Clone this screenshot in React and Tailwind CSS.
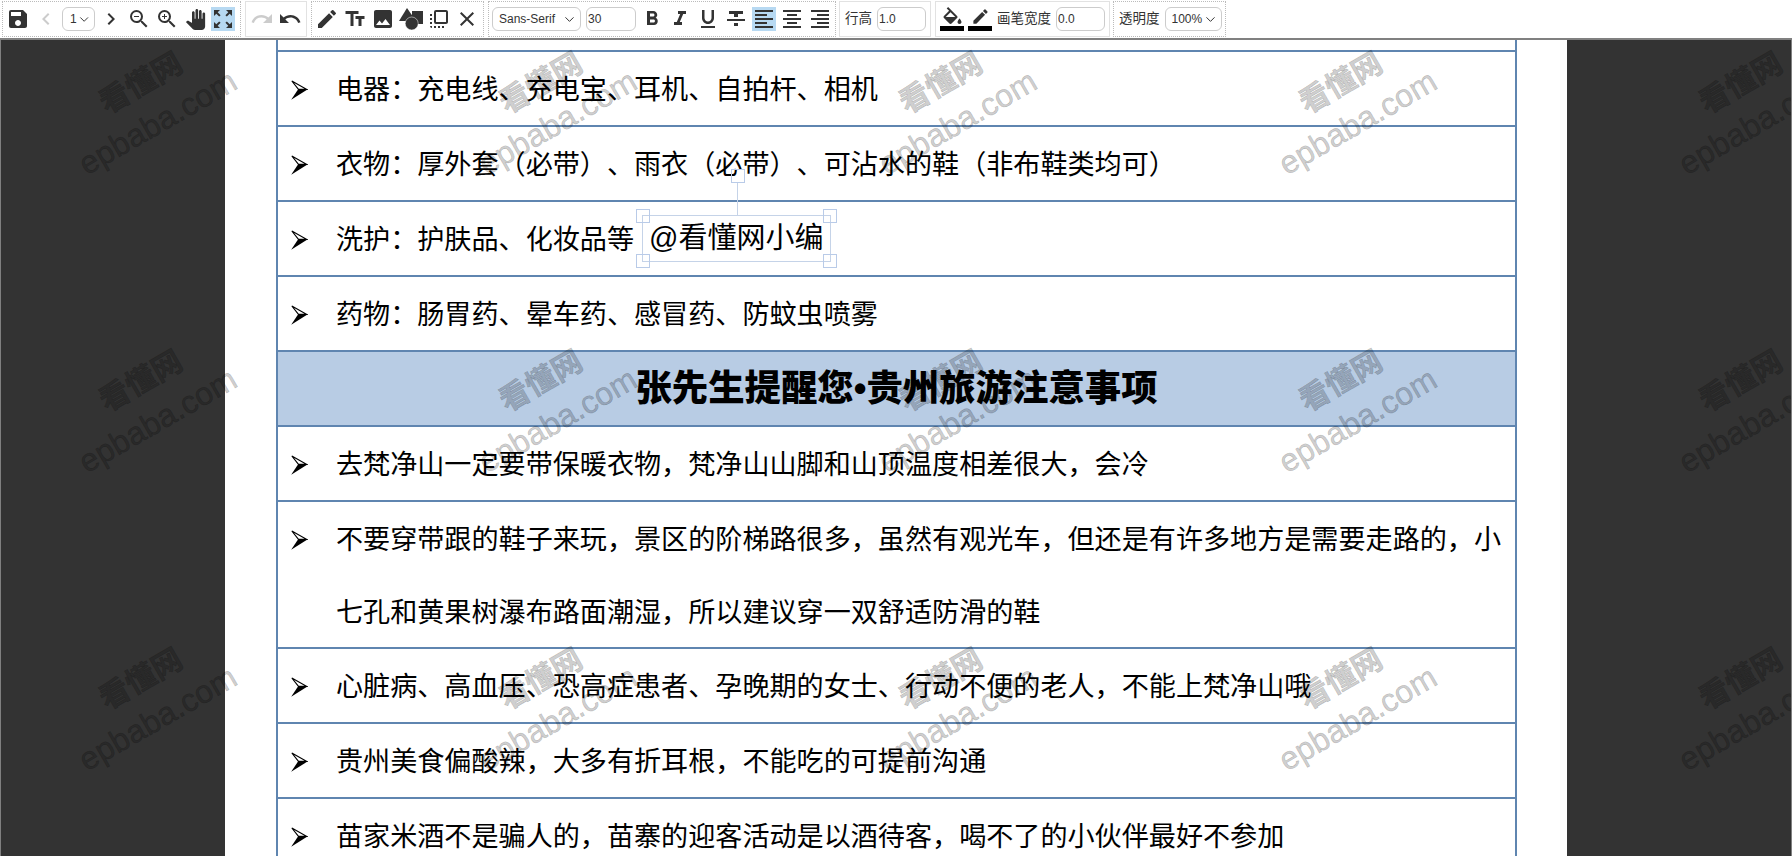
import React from "react";
import {
  MdSave, MdChevronLeft, MdChevronRight, MdZoomOut, MdZoomIn, MdPanTool, MdZoomOutMap,
  MdRedo, MdUndo, MdEdit, MdTextFields, MdImage, MdFlipToFront, MdClose,
  MdFormatBold, MdFormatItalic, MdFormatUnderlined, MdFormatStrikethrough,
  MdFormatAlignLeft, MdFormatAlignCenter, MdFormatAlignRight,
} from "react-icons/md";
import { ChevronDown } from "lucide-react";

const sans = "font-['Liberation_Sans','Noto_Sans_CJK_SC',sans-serif]";

function Btn({ icon: I, off, on, size = 24 }) {
  return (
    <div className={`w-6 h-6 flex items-center justify-center shrink-0 ${on ? "bg-[#b7d9f2]" : ""} ${off ? "text-[#cccccc]" : "text-[#333333]"}`}>
      <I size={size} />
    </div>
  );
}

function Sel({ w, label, pad }) {
  return (
    <div className={`${w} ${pad} h-6 shrink-0 flex items-center justify-between pr-[3px] border border-[#cccccc] rounded-[6px] text-[12px] text-[#333333]`}>
      <span>{label}</span>
      <ChevronDown size={15} strokeWidth={1.6} />
    </div>
  );
}

function Num({ value, w }) {
  return (
    <input
      readOnly
      value={value}
      className={`${w} h-6 shrink-0 pl-[1px] border border-[#cccccc] rounded-[6px] text-[12px] text-[#333333] outline-none`}
    />
  );
}

function Shapes() {
  return (
    <div className="w-6 h-6 shrink-0 flex items-center justify-center text-[#333333]">
      <svg width="24" height="23" viewBox="0 0 24 23">
        <rect x="13" y="3" width="11" height="13" fill="currentColor" />
        <path d="M8 0 L17 13 H0 Z" fill="currentColor" />
        <circle cx="12.7" cy="15.5" r="6.5" fill="currentColor" stroke="#fff" strokeWidth="0.5" />
      </svg>
    </div>
  );
}

function ColorBtn({ children }) {
  return (
    <div className="w-6 h-6 shrink-0 flex flex-col items-center justify-between text-[#333333]">
      {children}
      <div className="w-6 h-[5px] bg-black shrink-0" />
    </div>
  );
}

function Toolbar() {
  return (
    <div className={`${sans} h-[38px] bg-white flex items-start gap-[3px] pl-[2px] pt-[1px]`}>
      <div className="w-[239px] h-[36px] border border-dotted border-[#bbbbbb] flex items-center gap-1 pl-[3px]">
        <Btn icon={MdSave} />
        <Btn icon={MdChevronLeft} off />
        <Sel w="w-[33px]" label="1" pad="pl-[7px]" />
        <Btn icon={MdChevronRight} />
        <Btn icon={MdZoomOut} />
        <Btn icon={MdZoomIn} />
        <Btn icon={MdPanTool} size={21} />
        <Btn icon={MdZoomOutMap} on />
      </div>
      <div className="w-[62px] h-[36px] ml-[1px] border border-[#e2e2e2] flex items-center gap-1 pl-[4px]">
        <Btn icon={MdRedo} off />
        <Btn icon={MdUndo} />
      </div>
      <div className="w-[173px] h-[36px] ml-[1px] border border-dotted border-[#bbbbbb] flex items-center gap-1 pl-[3px]">
        <Btn icon={MdEdit} />
        <Btn icon={MdTextFields} />
        <Btn icon={MdImage} />
        <Shapes />
        <Btn icon={MdFlipToFront} />
        <Btn icon={MdClose} />
      </div>
      <div className="w-[348px] h-[36px] ml-[1px] border border-dotted border-[#bbbbbb] flex items-center gap-1 pl-[3px]">
        <Sel w="w-[89px]" label="Sans-Serif" pad="pl-[6px]" />
        <Num value="30" w="w-[50px] ml-[1px]" />
        <Btn icon={MdFormatBold} />
        <Btn icon={MdFormatItalic} />
        <Btn icon={MdFormatUnderlined} />
        <Btn icon={MdFormatStrikethrough} />
        <Btn icon={MdFormatAlignLeft} on />
        <Btn icon={MdFormatAlignCenter} />
        <Btn icon={MdFormatAlignRight} />
      </div>
      <div className="w-[92px] h-[36px] border border-[#e2e2e2] flex items-center gap-[5px] pl-[5px] text-[13.5px] text-[#333333]">
        <span>行高</span>
        <Num value="1.0" w="w-[49px]" />
      </div>
      <div className="w-[175px] h-[36px] ml-[1px] border border-[#e2e2e2] flex items-center gap-1 pl-[4px] text-[13.5px] text-[#333333]">
        <ColorBtn>
          <svg width="21" height="18" viewBox="2 0 20 18" fill="currentColor">
            <path d="M16.56 8.94 7.62 0 6.21 1.41l2.38 2.38-5.15 5.15a1.49 1.49 0 0 0 0 2.12l5.5 5.5c.29.29.68.44 1.06.44s.77-.15 1.06-.44l5.5-5.5c.59-.58.59-1.53 0-2.12zM5.21 10 10 5.21 14.79 10H5.21zM19 11.5s-2 2.17-2 3.5c0 1.1.9 2 2 2s2-.9 2-2c0-1.33-2-3.5-2-3.5z" />
          </svg>
        </ColorBtn>
        <ColorBtn>
          <MdEdit size={21} />
        </ColorBtn>
        <span className="ml-[1px] whitespace-nowrap">画笔宽度</span>
        <Num value="0.0" w="w-[49px] ml-[1px]" />
      </div>
      <div className="w-[113px] h-[36px] border border-dotted border-[#bbbbbb] flex items-center gap-[5px] pl-[5px] text-[13.5px] text-[#333333]">
        <span className="whitespace-nowrap">透明度</span>
        <Sel w="w-[57px]" label="100%" pad="pl-[6px]" />
      </div>
    </div>
  );
}

function Arrow() {
  return (
    <svg width="17" height="20" viewBox="0 0 50 60" className="shrink-0">
      <path d="M2 3 L46 28 H22 Z" fill="#fff" stroke="#000" strokeWidth="3.5" strokeLinejoin="miter" />
      <path d="M50 28 L0 59 L21 28 Z" fill="#000" />
    </svg>
  );
}

function Row({ lines, tall, children }) {
  return (
    <div className={`relative ${tall ? "h-[147px]" : "h-[75px]"} border-b-2 border-[#5f85b0] pl-[13px] pt-[1px] flex items-start shrink-0`}>
      <div className="h-[73px] flex items-center shrink-0">
        <Arrow />
      </div>
      <div className="ml-[28px] text-[27.1px] leading-[73px] text-black whitespace-nowrap [text-spacing-trim:space-all]">
        {lines.map((l, i) => (
          <div key={i}>{l}</div>
        ))}
      </div>
      {children}
    </div>
  );
}

function Handle({ pos }) {
  return <div className={`absolute w-[14px] h-[14px] border border-[#b9cbe8] ${pos}`} />;
}

function Annotation() {
  return (
    <div className="absolute left-[364px] top-[13px] w-[189px] h-[47px] border border-[#c5d3e8] flex items-center pl-[6px] pt-[1px] text-[29px] text-black whitespace-nowrap">
      @看懂网小编
      <Handle pos="-left-[7px] -top-[7px]" />
      <Handle pos="-right-[7px] -top-[7px]" />
      <Handle pos="-left-[7px] -bottom-[7px]" />
      <Handle pos="-right-[7px] -bottom-[7px]" />
      <Handle pos="left-[88px] -top-[47px]" />
      <div className="absolute left-[94px] -top-[33px] h-[33px] w-[1px] bg-[#c5d3e8]" />
    </div>
  );
}

function Watermarks() {
  const cells = Array.from({ length: 15 });
  return (
    <div className="absolute -left-[54px] -top-[85px] grid grid-cols-[repeat(5,400px)] auto-rows-[298px] pointer-events-none">
      {cells.map((_, i) => (
        <div key={i} className="flex items-center justify-center">
          <div className="-rotate-30 text-center leading-[43px] text-[rgba(0,0,0,0.2)] whitespace-nowrap [-webkit-text-stroke:0.6px_rgba(0,0,0,0.2)]">
            <div className="text-[30px] font-bold ml-[10px]">看懂网</div>
            <div className="text-[32px]">epbaba.com</div>
          </div>
        </div>
      ))}
    </div>
  );
}

export default function App() {
  return (
    <div className={`${sans} h-[856px] overflow-hidden bg-white flex flex-col`} lang="zh-CN">
      <Toolbar />
      <div className="relative flex-1 min-h-0 overflow-hidden flex border-t-2 border-x border-[#808080] bg-[#333333]">
        <div className="flex-1" />
        <div className="w-[1342px] bg-white pl-[51px]">
          <div className="w-[1241px] border-x-2 border-[#5f85b0] flex flex-col">
            <div className="h-[12px] border-b-2 border-[#5f85b0] shrink-0" />
            <Row lines={["电器：充电线、充电宝、耳机、自拍杆、相机"]} />
            <Row lines={["衣物：厚外套（必带）、雨衣（必带）、可沾水的鞋（非布鞋类均可）"]} />
            <Row lines={["洗护：护肤品、化妆品等"]}>
              <Annotation />
            </Row>
            <Row lines={["药物：肠胃药、晕车药、感冒药、防蚊虫喷雾"]} />
            <div className="h-[75px] shrink-0 border-b-2 border-[#5f85b0] bg-[#b8cce4] flex items-center justify-center pt-[1px] text-[36.4px] font-black text-black">
              张先生提醒您•贵州旅游注意事项
            </div>
            <Row lines={["去梵净山一定要带保暖衣物，梵净山山脚和山顶温度相差很大，会冷"]} />
            <Row tall lines={["不要穿带跟的鞋子来玩，景区的阶梯路很多，虽然有观光车，但还是有许多地方是需要走路的，小", "七孔和黄果树瀑布路面潮湿，所以建议穿一双舒适防滑的鞋"]} />
            <Row lines={["心脏病、高血压、恐高症患者、孕晚期的女士、行动不便的老人，不能上梵净山哦"]} />
            <Row lines={["贵州美食偏酸辣，大多有折耳根，不能吃的可提前沟通"]} />
            <Row lines={["苗家米酒不是骗人的，苗寨的迎客活动是以酒待客，喝不了的小伙伴最好不参加"]} />
          </div>
        </div>
        <div className="flex-1" />
        <Watermarks />
      </div>
    </div>
  );
}
